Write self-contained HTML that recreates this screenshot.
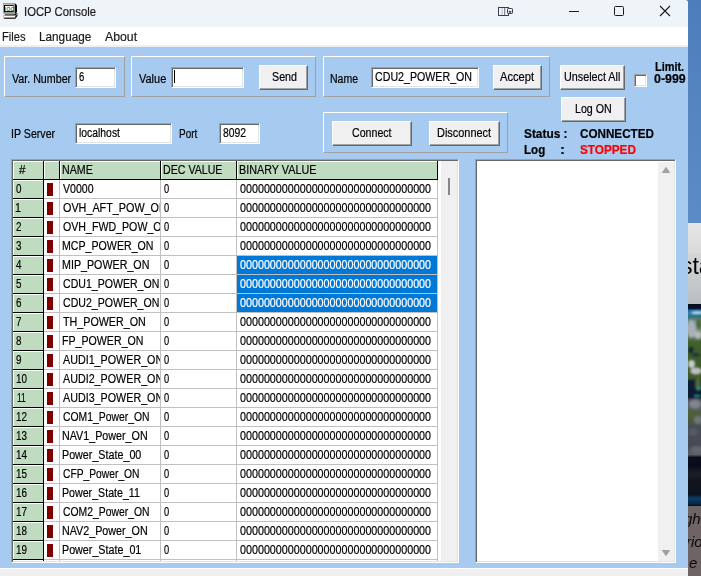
<!DOCTYPE html><html><head><meta charset="utf-8"><title>IOCP Console</title><style>
*{box-sizing:border-box;margin:0;padding:0}
html,body{width:701px;height:576px;overflow:hidden;background:#4e7dbc}
body{position:relative;font-family:"Liberation Sans",sans-serif;font-size:12.5px;line-height:16px;color:#000}
.a{position:absolute}
.t{position:absolute;white-space:pre;transform-origin:0 0;display:block;line-height:16px;height:16px;-webkit-text-stroke:0.2px currentColor}
.clip{position:absolute;overflow:hidden}
#desk{left:688px;top:0;width:13px;height:576px;overflow:hidden}
#win{left:0;top:0;width:688px;height:568px;background:#a6caf0;border-top-right-radius:3px;overflow:hidden}
#title{left:0;top:0;width:688px;height:27px;background:#eff4f9}
#menu{left:0;top:27px;width:688px;height:20px;background:#fff;border-bottom:2px solid #f0f0f0}
#bottom{left:0;top:568px;width:688px;height:8px;background:#f0f0f0;border-top:1px solid #fff}
.panel{position:absolute;border:1px solid;border-color:#fff #a0a0a0 #a0a0a0 #fff}
.edit{position:absolute;background:#fff;border:1px solid;border-color:#a0a0a0 #fff #fff #a0a0a0;box-shadow:inset 1px 1px 0 #696969,inset -1px -1px 0 #e3e3e3}
.btn{position:absolute;background:#f0f0f0;border:1px solid;border-color:#fff #696969 #696969 #fff;box-shadow:inset -1px -1px 0 #a0a0a0,inset 1px 1px 0 #f0f0f0}
.sunk{position:absolute;border:1px solid;border-color:#a0a0a0 #fff #fff #a0a0a0;box-shadow:inset 1px 1px 0 #696969,inset -1px -1px 0 #e3e3e3;background:#fff}
.fx{position:absolute;background:#c0dcc0;border-top:1px solid #fff;border-left:1px solid #fff}

.hw{transform:scaleX(0.999);transform-origin:0 0;font-size:15px;line-height:18px;font-style:italic;white-space:pre;color:#0a0a0a}
.vl{position:absolute;width:1px}
.hl{position:absolute;height:1px}
</style></head><body>
<div id="desk" class="a">
<div class="a" style="left:0;top:0;width:13px;height:223px;background:linear-gradient(#4e7dbc,#5c8cc5)"></div>
<div class="a" style="left:0;top:223px;width:13px;height:30px;background:linear-gradient(#e6e6e6,#dadada)"></div>
<div class="a" style="left:0;top:253px;width:13px;height:51px;background:linear-gradient(#d2d6d8,#c4c8ca 60%,#b9bcbe)"></div>
<div class="a" style="left:-7px;top:251px;font-size:23px;line-height:30px;white-space:pre;color:#000;transform:scaleX(0.999);transform-origin:0 0">sta</div>
<svg class="a" style="left:0;top:304px" width="13" height="202" viewBox="0 0 13 202">
<defs><linearGradient id="eg" x1="0" y1="0" x2="0" y2="202" gradientUnits="userSpaceOnUse">
<stop offset="0" stop-color="#040b1f"/><stop offset="0.022" stop-color="#06142f"/><stop offset="0.03" stop-color="#1c66a0"/>
<stop offset="0.045" stop-color="#2b80b4"/><stop offset="0.06" stop-color="#2d6f84"/><stop offset="0.075" stop-color="#56807a"/>
<stop offset="0.09" stop-color="#7d8f8c"/><stop offset="0.15" stop-color="#6f8372"/><stop offset="0.19" stop-color="#40602c"/>
<stop offset="0.34" stop-color="#3b5828"/><stop offset="0.365" stop-color="#3d5a2e"/><stop offset="0.385" stop-color="#0e1c36"/>
<stop offset="0.46" stop-color="#0c1932"/><stop offset="0.475" stop-color="#4a505c"/><stop offset="0.51" stop-color="#5a6068"/>
<stop offset="0.54" stop-color="#4e5f3e"/><stop offset="0.58" stop-color="#4a5648"/><stop offset="0.62" stop-color="#464c58"/>
<stop offset="0.70" stop-color="#464a54"/><stop offset="0.745" stop-color="#5a5e66"/><stop offset="0.76" stop-color="#0a0f1e"/>
<stop offset="0.80" stop-color="#070b19"/><stop offset="0.84" stop-color="#1b1f28"/><stop offset="0.88" stop-color="#11141c"/>
<stop offset="0.945" stop-color="#0b1424"/><stop offset="0.96" stop-color="#0b3b68"/><stop offset="0.985" stop-color="#0a2a4e"/><stop offset="1" stop-color="#050f26"/>
</linearGradient><filter id="bl" x="-50%" y="-50%" width="200%" height="200%"><feGaussianBlur stdDeviation="0.9"/></filter></defs>
<rect width="13" height="202" fill="url(#eg)"/>
<g filter="url(#bl)">
<ellipse cx="9" cy="8.6" rx="6" ry="1.2" fill="#eef4f4"/>
<ellipse cx="3.5" cy="25" rx="4.5" ry="9" fill="#a9b1b5"/>
<ellipse cx="10" cy="31" rx="3.5" ry="4" fill="#b4b9b8"/>
<ellipse cx="11" cy="20" rx="3" ry="5" fill="#4d6c36"/>
<ellipse cx="3" cy="46" rx="2.6" ry="3" fill="#15243a"/>
<ellipse cx="8" cy="51" rx="4" ry="1.4" fill="#1a2b40"/>
<ellipse cx="3.5" cy="60" rx="3.5" ry="4" fill="#c8cbca"/>
<ellipse cx="8" cy="67" rx="6" ry="3.5" fill="#bcc0be"/>
<ellipse cx="10" cy="80" rx="3" ry="7" fill="#4c6b32"/>
<ellipse cx="11" cy="84.5" rx="2.5" ry="1.2" fill="#2a9b9a"/>
<ellipse cx="9" cy="92" rx="3.5" ry="1.2" fill="#27908f"/>
<ellipse cx="7" cy="100" rx="6" ry="4.5" fill="#80848c"/>
<ellipse cx="4" cy="112" rx="4" ry="5" fill="#4d6034"/>
<ellipse cx="10" cy="116" rx="4" ry="4" fill="#70757c"/>
<ellipse cx="5" cy="128" rx="5" ry="4" fill="#565a64"/>
<ellipse cx="9" cy="146" rx="6" ry="4" fill="#62666e"/>
</g></svg>
<div class="a" style="left:0;top:506px;width:13px;height:70px;background:#6e6464"></div>
<div class="a hw" style="left:-4.5px;top:510px">gh</div><div class="a hw" style="left:-2px;top:532.5px">rio</div><div class="a hw" style="left:1px;top:554px">e</div>
</div>
<div id="win" class="a">
<div id="title" class="a"></div><div id="menu" class="a"></div>
<svg class="a" style="left:0;top:0;transform:scale(0.9999);transform-origin:0 0" width="22" height="22" viewBox="0 0 22 22">
<path d="M14.9 3.3L17 5.2V12.2L14.9 13.6z" fill="#000"/>
<rect x="3.2" y="2.9" width="11.7" height="10.6" fill="#bdbdbd"/>
<path d="M3.2 2.9H14.9V3.6H3.9V13.5H3.2z" fill="#8a8a8a"/>
<path d="M3.6 13.5V12.9H14.3V3.3H14.9V13.5z" fill="#7a7a7a"/>
<rect x="4" y="5" width="9.6" height="7.2" fill="#000"/>
<rect x="5" y="5.9" width="8.3" height="5.2" fill="#fff"/>
<rect x="5" y="13.5" width="9" height="1" fill="#9a9a9a"/>
<path d="M4.8 14.4H14.2L15.4 13.2H17.4V16L15.4 18.7H4.2V17.6z" fill="#000"/>
<rect x="3.8" y="15.5" width="11.5" height="2.1" fill="#fff"/>
<path d="M3.4 15.3H15.3V15.8H3.9V17.9H3.4z" fill="#8a8a8a"/>
<path d="M15.3 15.3L17 13.6V14.6L15.6 16z" fill="#c8c8c8"/>
</svg>
<span class="t" style="left:5px;top:0.7px;font-size:5.8px;color:#008000;transform:scaleX(0.88);-webkit-text-stroke:0.1px #008000">IOC</span>
<svg class="a" style="left:496px;top:5px" width="20" height="13" viewBox="0 0 20 13">
<rect x="2.5" y="2.5" width="10" height="8" fill="#f4f6fa" stroke="#3b3f52" stroke-width="1"/>
<rect x="5.6" y="3" width="1" height="7" fill="#b4b8c4"/><rect x="8.2" y="3" width="1" height="7" fill="#6a6e80"/>
<rect x="11.5" y="3.5" width="5" height="5" rx="0.7" fill="#f7f8fb" stroke="#3b3f52" stroke-width="1"/>
<rect x="12.7" y="5.9" width="2.6" height="1.7" fill="#3b3f52"/>
</svg>
<div class="a" style="left:569px;top:11px;width:10px;height:1px;background:#1a1a1a"></div>
<div class="a" style="left:614px;top:6px;width:10px;height:10px;border:1px solid #1a1a1a;border-radius:1.5px"></div>
<svg class="a" style="left:659px;top:5px" width="12" height="12" viewBox="0 0 12 12"><path d="M1 1L11 11M11 1L1 11" stroke="#1a1a1a" stroke-width="1.1" fill="none"/></svg>
<div class="panel" style="left:4px;top:56px;width:121px;height:41px"></div>
<div class="panel" style="left:131px;top:56px;width:185px;height:41px"></div>
<div class="panel" style="left:323px;top:56px;width:227px;height:41px"></div>
<div class="panel" style="left:323px;top:112px;width:185px;height:41px"></div>
<div class="edit" style="left:75px;top:67px;width:41px;height:21px"></div>
<div class="edit" style="left:171px;top:67px;width:73px;height:21px"></div>
<div class="edit" style="left:371px;top:67px;width:108px;height:21px"></div>
<div class="edit" style="left:75px;top:123px;width:97px;height:21px"></div>
<div class="edit" style="left:219px;top:123px;width:41px;height:21px"></div>
<div class="a" style="left:174px;top:70px;width:1px;height:13px;background:#000"></div>
<div class="btn" style="left:259px;top:65px;width:49px;height:25px"></div>
<div class="btn" style="left:493px;top:65px;width:49px;height:25px"></div>
<div class="btn" style="left:560px;top:65px;width:65px;height:25px"></div>
<div class="btn" style="left:561px;top:97px;width:65px;height:25px"></div>
<div class="btn" style="left:332px;top:121px;width:80px;height:25px"></div>
<div class="btn" style="left:429px;top:121px;width:71px;height:25px"></div>
<div class="edit" style="left:634px;top:74px;width:13px;height:13px"></div>
<div class="sunk" style="left:11px;top:159px;width:448px;height:404px;overflow:hidden"></div>
<div class="a" style="left:441px;top:161px;width:16px;height:400px;background:#f0f0f0"></div>
<div class="a" style="left:448px;top:178px;width:2px;height:17px;background:#868686"></div>
<div class="fx" style="left:13px;top:161px;width:30px;height:18px"></div>
<div class="vl" style="left:43px;top:161px;height:19px;background:#000"></div>
<div class="fx" style="left:44px;top:161px;width:15px;height:18px"></div>
<div class="vl" style="left:59px;top:161px;height:19px;background:#000"></div>
<div class="fx" style="left:60px;top:161px;width:100px;height:18px"></div>
<div class="vl" style="left:160px;top:161px;height:19px;background:#000"></div>
<div class="fx" style="left:161px;top:161px;width:75px;height:18px"></div>
<div class="vl" style="left:236px;top:161px;height:19px;background:#000"></div>
<div class="fx" style="left:237px;top:161px;width:200px;height:18px"></div>
<div class="vl" style="left:437px;top:161px;height:19px;background:#000"></div>
<div class="hl" style="left:13px;top:179px;width:425px;background:#000"></div>
<div class="fx" style="left:13px;top:180px;width:30px;height:18px"></div>
<div class="hl" style="left:13px;top:198px;width:31px;background:#000"></div>
<div class="hl" style="left:44px;top:198px;width:394px;background:#c0c0c0"></div>
<div class="a" style="left:47px;top:183px;width:6px;height:13px;background:#800000"></div>
<div class="fx" style="left:13px;top:199px;width:30px;height:18px"></div>
<div class="hl" style="left:13px;top:217px;width:31px;background:#000"></div>
<div class="hl" style="left:44px;top:217px;width:394px;background:#c0c0c0"></div>
<div class="a" style="left:47px;top:202px;width:6px;height:13px;background:#800000"></div>
<div class="fx" style="left:13px;top:218px;width:30px;height:18px"></div>
<div class="hl" style="left:13px;top:236px;width:31px;background:#000"></div>
<div class="hl" style="left:44px;top:236px;width:394px;background:#c0c0c0"></div>
<div class="a" style="left:47px;top:221px;width:6px;height:13px;background:#800000"></div>
<div class="fx" style="left:13px;top:237px;width:30px;height:18px"></div>
<div class="hl" style="left:13px;top:255px;width:31px;background:#000"></div>
<div class="hl" style="left:44px;top:255px;width:394px;background:#c0c0c0"></div>
<div class="a" style="left:47px;top:240px;width:6px;height:13px;background:#800000"></div>
<div class="fx" style="left:13px;top:256px;width:30px;height:18px"></div>
<div class="hl" style="left:13px;top:274px;width:31px;background:#000"></div>
<div class="hl" style="left:44px;top:274px;width:394px;background:#c0c0c0"></div>
<div class="a" style="left:47px;top:259px;width:6px;height:13px;background:#800000"></div>
<div class="a" style="left:237px;top:256px;width:200px;height:18px;background:#0078d7"></div>
<div class="fx" style="left:13px;top:275px;width:30px;height:18px"></div>
<div class="hl" style="left:13px;top:293px;width:31px;background:#000"></div>
<div class="hl" style="left:44px;top:293px;width:394px;background:#c0c0c0"></div>
<div class="a" style="left:47px;top:278px;width:6px;height:13px;background:#800000"></div>
<div class="a" style="left:237px;top:275px;width:200px;height:18px;background:#0078d7"></div>
<div class="fx" style="left:13px;top:294px;width:30px;height:18px"></div>
<div class="hl" style="left:13px;top:312px;width:31px;background:#000"></div>
<div class="hl" style="left:44px;top:312px;width:394px;background:#c0c0c0"></div>
<div class="a" style="left:47px;top:297px;width:6px;height:13px;background:#800000"></div>
<div class="a" style="left:237px;top:294px;width:200px;height:18px;background:#0078d7"></div>
<div class="fx" style="left:13px;top:313px;width:30px;height:18px"></div>
<div class="hl" style="left:13px;top:331px;width:31px;background:#000"></div>
<div class="hl" style="left:44px;top:331px;width:394px;background:#c0c0c0"></div>
<div class="a" style="left:47px;top:316px;width:6px;height:13px;background:#800000"></div>
<div class="fx" style="left:13px;top:332px;width:30px;height:18px"></div>
<div class="hl" style="left:13px;top:350px;width:31px;background:#000"></div>
<div class="hl" style="left:44px;top:350px;width:394px;background:#c0c0c0"></div>
<div class="a" style="left:47px;top:335px;width:6px;height:13px;background:#800000"></div>
<div class="fx" style="left:13px;top:351px;width:30px;height:18px"></div>
<div class="hl" style="left:13px;top:369px;width:31px;background:#000"></div>
<div class="hl" style="left:44px;top:369px;width:394px;background:#c0c0c0"></div>
<div class="a" style="left:47px;top:354px;width:6px;height:13px;background:#800000"></div>
<div class="fx" style="left:13px;top:370px;width:30px;height:18px"></div>
<div class="hl" style="left:13px;top:388px;width:31px;background:#000"></div>
<div class="hl" style="left:44px;top:388px;width:394px;background:#c0c0c0"></div>
<div class="a" style="left:47px;top:373px;width:6px;height:13px;background:#800000"></div>
<div class="fx" style="left:13px;top:389px;width:30px;height:18px"></div>
<div class="hl" style="left:13px;top:407px;width:31px;background:#000"></div>
<div class="hl" style="left:44px;top:407px;width:394px;background:#c0c0c0"></div>
<div class="a" style="left:47px;top:392px;width:6px;height:13px;background:#800000"></div>
<div class="fx" style="left:13px;top:408px;width:30px;height:18px"></div>
<div class="hl" style="left:13px;top:426px;width:31px;background:#000"></div>
<div class="hl" style="left:44px;top:426px;width:394px;background:#c0c0c0"></div>
<div class="a" style="left:47px;top:411px;width:6px;height:13px;background:#800000"></div>
<div class="fx" style="left:13px;top:427px;width:30px;height:18px"></div>
<div class="hl" style="left:13px;top:445px;width:31px;background:#000"></div>
<div class="hl" style="left:44px;top:445px;width:394px;background:#c0c0c0"></div>
<div class="a" style="left:47px;top:430px;width:6px;height:13px;background:#800000"></div>
<div class="fx" style="left:13px;top:446px;width:30px;height:18px"></div>
<div class="hl" style="left:13px;top:464px;width:31px;background:#000"></div>
<div class="hl" style="left:44px;top:464px;width:394px;background:#c0c0c0"></div>
<div class="a" style="left:47px;top:449px;width:6px;height:13px;background:#800000"></div>
<div class="fx" style="left:13px;top:465px;width:30px;height:18px"></div>
<div class="hl" style="left:13px;top:483px;width:31px;background:#000"></div>
<div class="hl" style="left:44px;top:483px;width:394px;background:#c0c0c0"></div>
<div class="a" style="left:47px;top:468px;width:6px;height:13px;background:#800000"></div>
<div class="fx" style="left:13px;top:484px;width:30px;height:18px"></div>
<div class="hl" style="left:13px;top:502px;width:31px;background:#000"></div>
<div class="hl" style="left:44px;top:502px;width:394px;background:#c0c0c0"></div>
<div class="a" style="left:47px;top:487px;width:6px;height:13px;background:#800000"></div>
<div class="fx" style="left:13px;top:503px;width:30px;height:18px"></div>
<div class="hl" style="left:13px;top:521px;width:31px;background:#000"></div>
<div class="hl" style="left:44px;top:521px;width:394px;background:#c0c0c0"></div>
<div class="a" style="left:47px;top:506px;width:6px;height:13px;background:#800000"></div>
<div class="fx" style="left:13px;top:522px;width:30px;height:18px"></div>
<div class="hl" style="left:13px;top:540px;width:31px;background:#000"></div>
<div class="hl" style="left:44px;top:540px;width:394px;background:#c0c0c0"></div>
<div class="a" style="left:47px;top:525px;width:6px;height:13px;background:#800000"></div>
<div class="fx" style="left:13px;top:541px;width:30px;height:18px"></div>
<div class="hl" style="left:13px;top:559px;width:31px;background:#000"></div>
<div class="hl" style="left:44px;top:559px;width:394px;background:#c0c0c0"></div>
<div class="a" style="left:47px;top:544px;width:6px;height:13px;background:#800000"></div>
<div class="vl" style="left:43px;top:180px;height:381px;background:#000"></div>
<div class="vl" style="left:59px;top:180px;height:381px;background:#c0c0c0"></div>
<div class="vl" style="left:160px;top:180px;height:381px;background:#c0c0c0"></div>
<div class="vl" style="left:236px;top:180px;height:381px;background:#c0c0c0"></div>
<div class="vl" style="left:437px;top:180px;height:381px;background:#c0c0c0"></div>
<div class="sunk" style="left:475px;top:159px;width:201px;height:404px"></div>
<div class="a" style="left:658px;top:162px;width:16px;height:399px;background:#f0f0f0"></div>
<svg class="a" style="left:658px;top:161px" width="16" height="400" viewBox="0 0 16 400"><path d="M3.7 12L8 5.7L12.3 12z" fill="#a0a0a0"/><path d="M3.7 389L8 395.3L12.3 389z" fill="#a0a0a0"/></svg>
<span class="t" style="left:23.70px;top:4px;transform:scaleX(0.9032);color:#1b1b1b;">IOCP Console</span>
<span class="t" style="left:1.71px;top:29px;transform:scaleX(0.8910);color:#1b1b1b;">Files</span>
<span class="t" style="left:38.66px;top:29px;transform:scaleX(0.9403);color:#1b1b1b;">Language</span>
<span class="t" style="left:105.40px;top:29px;transform:scaleX(0.9821);color:#1b1b1b;">About</span>
<span class="t" style="left:12.00px;top:71px;transform:scaleX(0.8541);">Var. Number</span>
<span class="t" style="left:79.00px;top:69px;transform:scaleX(0.7571);">6</span>
<span class="t" style="left:139.00px;top:71px;transform:scaleX(0.8781);">Value</span>
<span class="t" style="left:271.50px;top:69px;transform:scaleX(0.8550);">Send</span>
<span class="t" style="left:329.86px;top:71px;transform:scaleX(0.8428);">Name</span>
<span class="t" style="left:374.50px;top:69px;transform:scaleX(0.8518);">CDU2_POWER_ON</span>
<span class="t" style="left:499.80px;top:69px;transform:scaleX(0.8905);">Accept</span>
<span class="t" style="left:564.40px;top:69px;transform:scaleX(0.8617);">Unselect All</span>
<span class="t" style="left:654.60px;top:59px;transform:scaleX(0.8734);font-weight:bold;">Limit.</span>
<span class="t" style="left:653.60px;top:71px;transform:scaleX(0.9932);font-weight:bold;">0-999</span>
<span class="t" style="left:574.95px;top:101px;transform:scaleX(0.8537);">Log ON</span>
<span class="t" style="left:10.85px;top:126px;transform:scaleX(0.8501);">IP Server</span>
<span class="t" style="left:78.70px;top:125px;transform:scaleX(0.8303);">localhost</span>
<span class="t" style="left:179.00px;top:126px;transform:scaleX(0.7973);">Port</span>
<span class="t" style="left:222.80px;top:125px;transform:scaleX(0.8293);">8092</span>
<span class="t" style="left:352.20px;top:125px;transform:scaleX(0.8495);">Connect</span>
<span class="t" style="left:436.62px;top:125px;transform:scaleX(0.8751);">Disconnect</span>
<span class="t" style="left:523.60px;top:126px;transform:scaleX(0.9491);font-weight:bold;">Status :</span>
<span class="t" style="left:579.90px;top:126px;transform:scaleX(0.9338);font-weight:bold;">CONNECTED</span>
<span class="t" style="left:523.60px;top:142px;transform:scaleX(0.9250);font-weight:bold;">Log</span>
<span class="t" style="left:560.40px;top:142px;transform:scaleX(1.2000);font-weight:bold;">:</span>
<span class="t" style="left:579.90px;top:142px;transform:scaleX(0.9398);font-weight:bold;color:#ff0000;">STOPPED</span>
<span class="t" style="left:18.60px;top:162px;transform:scaleX(0.9286);">#</span>
<span class="t" style="left:61.65px;top:162px;transform:scaleX(0.8540);">NAME</span>
<span class="t" style="left:162.85px;top:162px;transform:scaleX(0.8500);">DEC VALUE</span>
<span class="t" style="left:238.64px;top:162px;transform:scaleX(0.8643);">BINARY VALUE</span>
<span class="t" style="left:15.50px;top:181px;transform:scaleX(0.7857);">0</span>
<div class="clip" style="left:60px;width:100px;top:181px;height:16px"><span class="t" style="left:2.50px;top:0;transform:scaleX(0.8455);">V0000</span></div>
<span class="t" style="left:164.20px;top:181px;transform:scaleX(0.7429);">0</span>
<span class="t" style="left:240.20px;top:181px;transform:scaleX(0.8588);">00000000000000000000000000000000</span>
<span class="t" style="left:15.20px;top:200px;transform:scaleX(0.8571);">1</span>
<div class="clip" style="left:60px;width:100px;top:200px;height:16px"><span class="t" style="left:2.50px;top:0;transform:scaleX(0.8635);">OVH_AFT_POW_ON</span></div>
<span class="t" style="left:164.20px;top:200px;transform:scaleX(0.7429);">0</span>
<span class="t" style="left:240.20px;top:200px;transform:scaleX(0.8588);">00000000000000000000000000000000</span>
<span class="t" style="left:15.50px;top:219px;transform:scaleX(0.7857);">2</span>
<div class="clip" style="left:60px;width:100px;top:219px;height:16px"><span class="t" style="left:2.50px;top:0;transform:scaleX(0.8499);">OVH_FWD_POW_ON</span></div>
<span class="t" style="left:164.20px;top:219px;transform:scaleX(0.7429);">0</span>
<span class="t" style="left:240.20px;top:219px;transform:scaleX(0.8588);">00000000000000000000000000000000</span>
<span class="t" style="left:15.50px;top:238px;transform:scaleX(0.7857);">3</span>
<div class="clip" style="left:60px;width:100px;top:238px;height:16px"><span class="t" style="left:1.65px;top:0;transform:scaleX(0.8497);">MCP_POWER_ON</span></div>
<span class="t" style="left:164.20px;top:238px;transform:scaleX(0.7429);">0</span>
<span class="t" style="left:240.20px;top:238px;transform:scaleX(0.8588);">00000000000000000000000000000000</span>
<span class="t" style="left:15.50px;top:257px;transform:scaleX(0.7857);">4</span>
<div class="clip" style="left:60px;width:100px;top:257px;height:16px"><span class="t" style="left:1.64px;top:0;transform:scaleX(0.8558);">MIP_POWER_ON</span></div>
<span class="t" style="left:164.20px;top:257px;transform:scaleX(0.7429);">0</span>
<span class="t" style="left:240.20px;top:257px;transform:scaleX(0.8588);color:#fff;">00000000000000000000000000000000</span>
<span class="t" style="left:15.50px;top:276px;transform:scaleX(0.7857);">5</span>
<div class="clip" style="left:60px;width:100px;top:276px;height:16px"><span class="t" style="left:2.50px;top:0;transform:scaleX(0.8452);">CDU1_POWER_ON</span></div>
<span class="t" style="left:164.20px;top:276px;transform:scaleX(0.7429);">0</span>
<span class="t" style="left:240.20px;top:276px;transform:scaleX(0.8588);color:#fff;">00000000000000000000000000000000</span>
<span class="t" style="left:15.50px;top:295px;transform:scaleX(0.7857);">6</span>
<div class="clip" style="left:60px;width:100px;top:295px;height:16px"><span class="t" style="left:2.50px;top:0;transform:scaleX(0.8452);">CDU2_POWER_ON</span></div>
<span class="t" style="left:164.20px;top:295px;transform:scaleX(0.7429);">0</span>
<span class="t" style="left:240.20px;top:295px;transform:scaleX(0.8588);color:#fff;">00000000000000000000000000000000</span>
<span class="t" style="left:15.50px;top:314px;transform:scaleX(0.7857);">7</span>
<div class="clip" style="left:60px;width:100px;top:314px;height:16px"><span class="t" style="left:2.50px;top:0;transform:scaleX(0.8569);">TH_POWER_ON</span></div>
<span class="t" style="left:164.20px;top:314px;transform:scaleX(0.7429);">0</span>
<span class="t" style="left:240.20px;top:314px;transform:scaleX(0.8588);">00000000000000000000000000000000</span>
<span class="t" style="left:15.50px;top:333px;transform:scaleX(0.7857);">8</span>
<div class="clip" style="left:60px;width:100px;top:333px;height:16px"><span class="t" style="left:1.65px;top:0;transform:scaleX(0.8500);">FP_POWER_ON</span></div>
<span class="t" style="left:164.20px;top:333px;transform:scaleX(0.7429);">0</span>
<span class="t" style="left:240.20px;top:333px;transform:scaleX(0.8588);">00000000000000000000000000000000</span>
<span class="t" style="left:15.50px;top:352px;transform:scaleX(0.7857);">9</span>
<div class="clip" style="left:60px;width:100px;top:352px;height:16px"><span class="t" style="left:2.50px;top:0;transform:scaleX(0.8588);">AUDI1_POWER_ON</span></div>
<span class="t" style="left:164.20px;top:352px;transform:scaleX(0.7429);">0</span>
<span class="t" style="left:240.20px;top:352px;transform:scaleX(0.8588);">00000000000000000000000000000000</span>
<span class="t" style="left:16.20px;top:371px;transform:scaleX(0.7884);">10</span>
<div class="clip" style="left:60px;width:100px;top:371px;height:16px"><span class="t" style="left:2.50px;top:0;transform:scaleX(0.8588);">AUDI2_POWER_ON</span></div>
<span class="t" style="left:164.20px;top:371px;transform:scaleX(0.7429);">0</span>
<span class="t" style="left:240.20px;top:371px;transform:scaleX(0.8588);">00000000000000000000000000000000</span>
<span class="t" style="left:16.60px;top:390px;transform:scaleX(0.6603);">11</span>
<div class="clip" style="left:60px;width:100px;top:390px;height:16px"><span class="t" style="left:2.50px;top:0;transform:scaleX(0.8588);">AUDI3_POWER_ON</span></div>
<span class="t" style="left:164.20px;top:390px;transform:scaleX(0.7429);">0</span>
<span class="t" style="left:240.20px;top:390px;transform:scaleX(0.8588);">00000000000000000000000000000000</span>
<span class="t" style="left:16.20px;top:409px;transform:scaleX(0.7884);">12</span>
<div class="clip" style="left:60px;width:100px;top:409px;height:16px"><span class="t" style="left:2.50px;top:0;transform:scaleX(0.8304);">COM1_Power_ON</span></div>
<span class="t" style="left:164.20px;top:409px;transform:scaleX(0.7429);">0</span>
<span class="t" style="left:240.20px;top:409px;transform:scaleX(0.8588);">00000000000000000000000000000000</span>
<span class="t" style="left:16.20px;top:428px;transform:scaleX(0.7884);">13</span>
<div class="clip" style="left:60px;width:100px;top:428px;height:16px"><span class="t" style="left:1.64px;top:0;transform:scaleX(0.8584);">NAV1_Power_ON</span></div>
<span class="t" style="left:164.20px;top:428px;transform:scaleX(0.7429);">0</span>
<span class="t" style="left:240.20px;top:428px;transform:scaleX(0.8588);">00000000000000000000000000000000</span>
<span class="t" style="left:16.20px;top:447px;transform:scaleX(0.7884);">14</span>
<div class="clip" style="left:60px;width:100px;top:447px;height:16px"><span class="t" style="left:1.64px;top:0;transform:scaleX(0.8582);">Power_State_00</span></div>
<span class="t" style="left:164.20px;top:447px;transform:scaleX(0.7429);">0</span>
<span class="t" style="left:240.20px;top:447px;transform:scaleX(0.8588);">00000000000000000000000000000000</span>
<span class="t" style="left:16.20px;top:466px;transform:scaleX(0.7884);">15</span>
<div class="clip" style="left:60px;width:100px;top:466px;height:16px"><span class="t" style="left:2.50px;top:0;transform:scaleX(0.8221);">CFP_Power_ON</span></div>
<span class="t" style="left:164.20px;top:466px;transform:scaleX(0.7429);">0</span>
<span class="t" style="left:240.20px;top:466px;transform:scaleX(0.8588);">00000000000000000000000000000000</span>
<span class="t" style="left:16.20px;top:485px;transform:scaleX(0.7884);">16</span>
<div class="clip" style="left:60px;width:100px;top:485px;height:16px"><span class="t" style="left:1.65px;top:0;transform:scaleX(0.8515);">Power_State_11</span></div>
<span class="t" style="left:164.20px;top:485px;transform:scaleX(0.7429);">0</span>
<span class="t" style="left:240.20px;top:485px;transform:scaleX(0.8588);">00000000000000000000000000000000</span>
<span class="t" style="left:16.20px;top:504px;transform:scaleX(0.7884);">17</span>
<div class="clip" style="left:60px;width:100px;top:504px;height:16px"><span class="t" style="left:2.50px;top:0;transform:scaleX(0.8304);">COM2_Power_ON</span></div>
<span class="t" style="left:164.20px;top:504px;transform:scaleX(0.7429);">0</span>
<span class="t" style="left:240.20px;top:504px;transform:scaleX(0.8588);">00000000000000000000000000000000</span>
<span class="t" style="left:16.20px;top:523px;transform:scaleX(0.7884);">18</span>
<div class="clip" style="left:60px;width:100px;top:523px;height:16px"><span class="t" style="left:1.64px;top:0;transform:scaleX(0.8584);">NAV2_Power_ON</span></div>
<span class="t" style="left:164.20px;top:523px;transform:scaleX(0.7429);">0</span>
<span class="t" style="left:240.20px;top:523px;transform:scaleX(0.8588);">00000000000000000000000000000000</span>
<span class="t" style="left:16.20px;top:542px;transform:scaleX(0.7884);">19</span>
<div class="clip" style="left:60px;width:100px;top:542px;height:16px"><span class="t" style="left:1.64px;top:0;transform:scaleX(0.8582);">Power_State_01</span></div>
<span class="t" style="left:164.20px;top:542px;transform:scaleX(0.7429);">0</span>
<span class="t" style="left:240.20px;top:542px;transform:scaleX(0.8588);">00000000000000000000000000000000</span>
</div>
<div id="bottom" class="a"></div>
</body></html>
